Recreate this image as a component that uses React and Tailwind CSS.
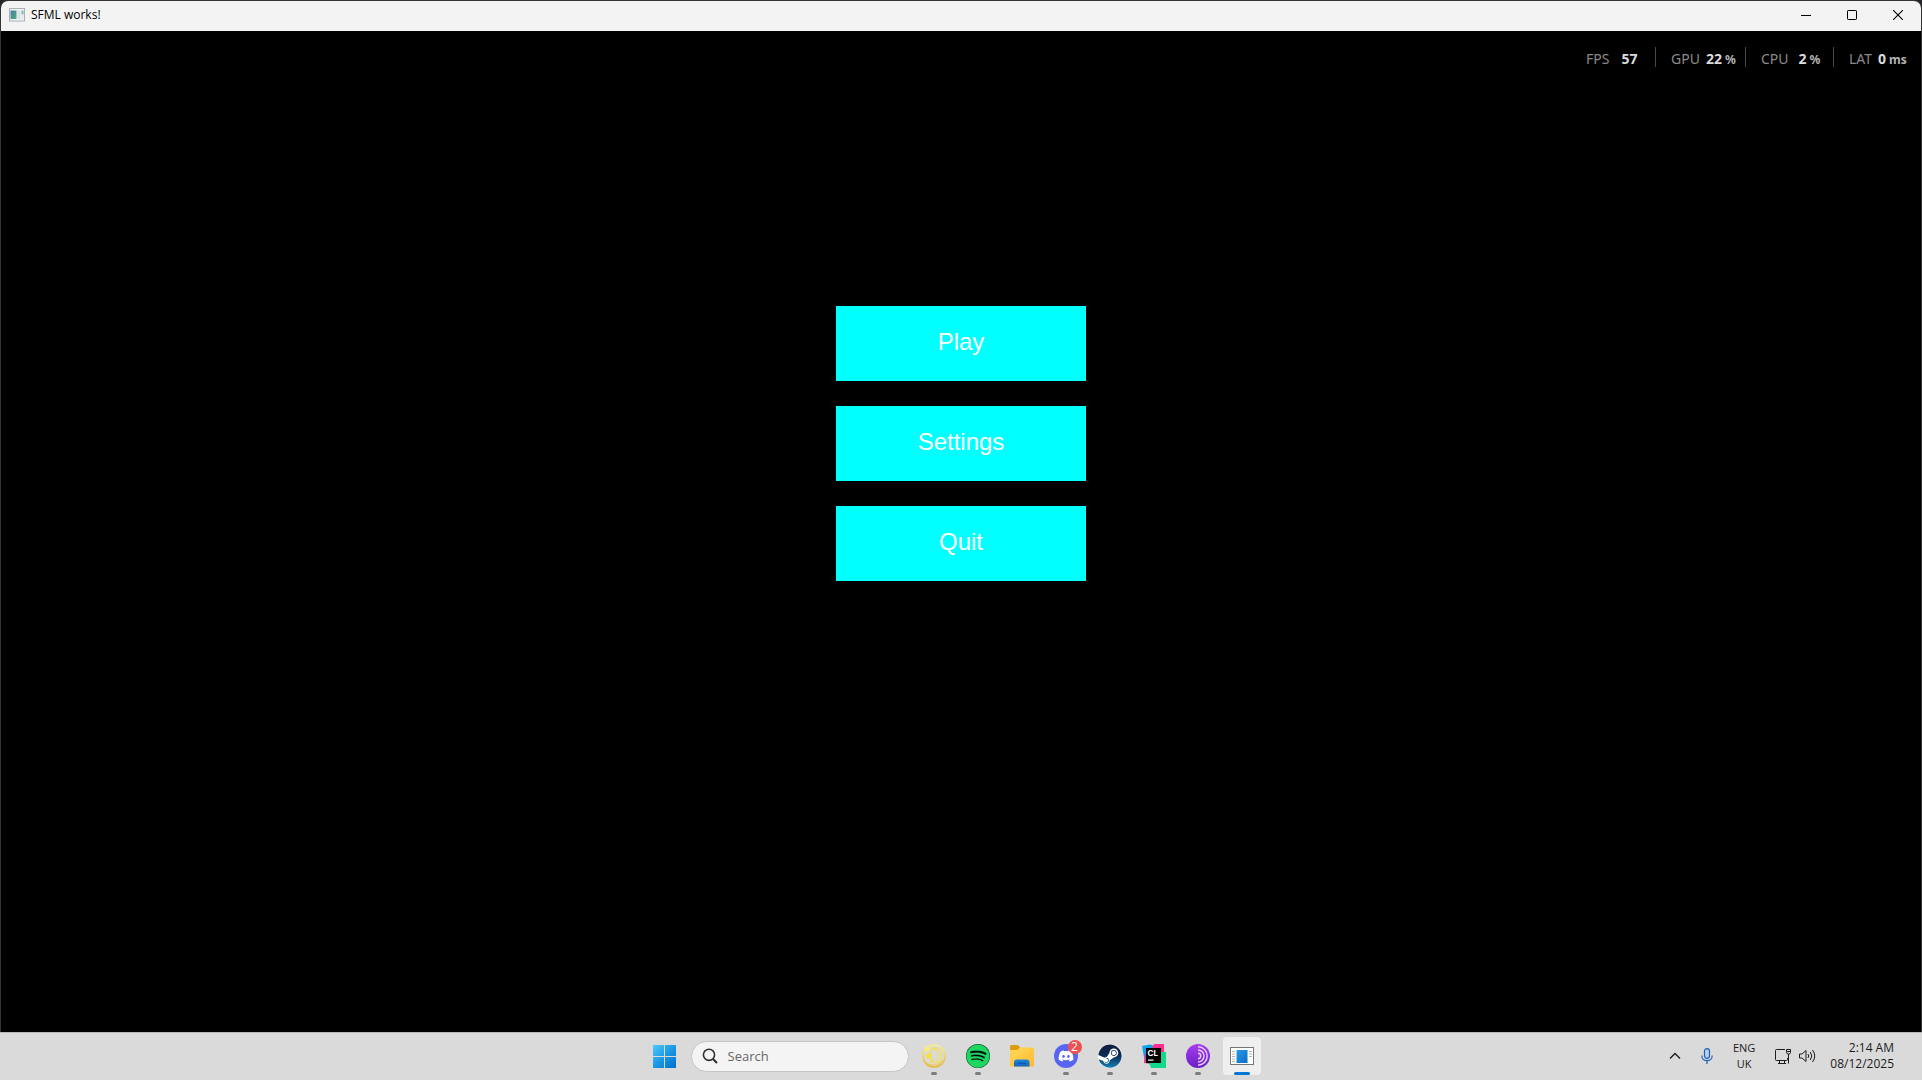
import React from 'react';
import { FaDiscord, FaSpotify, FaSteam } from 'react-icons/fa';

const stats = [
  { label: 'FPS', value: '57', unit: '', box: 'w-[84px] gap-3' },
  { label: 'GPU', value: '22', unit: '%', box: 'w-[90px] gap-[6px] border-l' },
  { label: 'CPU', value: '2', unit: '%', box: 'w-[88px] gap-[10px] border-l' },
  { label: 'LAT', value: '0', unit: 'ms', box: 'w-[88px] gap-[6px] border-l' },
];

const menu = ['Play', 'Settings', 'Quit'];

const WindowIcon = () => (
  <svg width="16" height="14" viewBox="0 0 16 14" aria-hidden="true">
    <defs>
      <linearGradient id="win" x1="0" y1="0" x2="1" y2="1">
        <stop offset="0" stopColor="#4a7ba6" />
        <stop offset="1" stopColor="#4fae7c" />
      </linearGradient>
    </defs>
    <rect x="0.5" y="0.5" width="15" height="12.5" fill="#f1f3f5" stroke="#a9b0b6" />
    <rect x="1.5" y="2.5" width="6" height="8.5" fill="url(#win)" />
    <rect x="8.5" y="2.5" width="3" height="8.5" fill="#dde0e4" />
    <rect x="12.5" y="2.5" width="2" height="4" fill="#7fb8a6" />
    <rect x="12.5" y="7" width="2" height="4" fill="#e3e6ea" />
  </svg>
);

const StartIcon = () => (
  <svg width="24" height="24" viewBox="0 0 24 24" aria-hidden="true">
    <defs>
      <linearGradient id="start" x1="0" y1="0" x2="1" y2="1">
        <stop offset="0" stopColor="#4ccbfb" />
        <stop offset="0.5" stopColor="#1c98e4" />
        <stop offset="1" stopColor="#0070cc" />
      </linearGradient>
    </defs>
    <path fill="url(#start)" d="M0 1h11v11H0zM12 1h11v11H12zM0 13h11v11H0zM12 13h11v11H12z" />
  </svg>
);

const SearchIcon = () => (
  <svg width="16" height="16" viewBox="0 0 16 16" fill="none" stroke="#303030" aria-hidden="true">
    <circle cx="7" cy="6.8" r="5.6" strokeWidth="1.6" />
    <path d="M11 11l4 4" strokeWidth="2.2" />
  </svg>
);

const GoldIcon = () => (
  <svg width="24" height="24" viewBox="0 0 24 24" fill="none" stroke="#ecc94a" aria-hidden="true">
    <defs>
      <linearGradient id="gold" x1="0" y1="0" x2="0" y2="1">
        <stop offset="0" stopColor="#f8ee8a" />
        <stop offset="1" stopColor="#e6b83c" />
      </linearGradient>
    </defs>
    <circle cx="12" cy="12" r="11" stroke="url(#gold)" strokeWidth="1.7" />
    <path d="M4 18.500C8 22 17 22.500 20.500 16" strokeWidth="1" />
    <path d="M12 3.500c-5 3-5.500 11 .5 15.500" stroke="#f4df55" strokeWidth="1.400" />
    <path d="M12 4.500c4-1.500 7 2.500 7 7 0 4-2.500 6.800-5 7.500 3.500-4.500 3-11-2-14.500z" stroke="#f4df55" strokeWidth="1.200" />
    <path d="M2 8L3.500 2l3 2.500L10 2 7 7z" fill="#f8ec7c" stroke="none" />
    <path d="M7 8l1.200 2.600 2.600.6-2 1.900.5 2.900L7 14.300 4.500 15.800l.5-2.800-2.200-2 2.900-.4z" fill="#f7e03f" stroke="none" />
    <circle cx="9.500" cy="17.500" r="1.200" fill="#f5d94a" stroke="none" />
  </svg>
);

const SpotifyIcon = () => (
  <span className="flex rounded-full bg-black">
    <FaSpotify size={24} fill="#1ed760" stroke="#1ed760" strokeWidth={6} aria-hidden="true" />
  </span>
);

const FolderIcon = () => (
  <svg width="24" height="24" viewBox="0 0 24 24" aria-hidden="true">
    <defs>
      <linearGradient id="folder" x1="0" y1="0" x2="1" y2="1">
        <stop offset="0" stopColor="#ffdb5e" />
        <stop offset="1" stopColor="#ffb92c" />
      </linearGradient>
      <linearGradient id="pocket" x1="0" y1="0" x2="0" y2="1">
        <stop offset="0" stopColor="#1d86de" />
        <stop offset="1" stopColor="#1266bd" />
      </linearGradient>
    </defs>
    <path d="M0 2.500Q0 1 1.500 1H7q1 0 1.800.8L10.500 4 8.500 6H0z" fill="#dd9c0c" />
    <path d="M0 6h6.500q1 0 1.700-.7L9.400 4q.4-.5 1-.5H23q1 0 1 1v17q0 1-1 1H1q-1 0-1-1z" fill="url(#folder)" />
    <path d="M4 22.500v-4q0-3 3-3h9.500q3 0 3 3v4z" fill="url(#pocket)" />
    <rect x="7.500" y="18.500" width="8.500" height="1.500" rx="0.700" fill="#0f5aa8" />
  </svg>
);

const DiscordIcon = () => (
  <span className="relative flex size-6 items-center justify-center rounded-full bg-[#5865f2]">
    <FaDiscord size={16} fill="#fff" aria-hidden="true" />
    <span className="absolute -top-1 left-[14px] flex size-[14px] items-center justify-center rounded-full bg-[#f05050] text-[12px] leading-none text-white">
      2
    </span>
  </span>
);

const SteamIcon = () => (
  <span className="relative flex rounded-full bg-white">
    <svg width="0" height="0" className="absolute" aria-hidden="true">
      <defs>
        <linearGradient id="steam" x1="0" y1="0" x2="0" y2="1">
          <stop offset="0" stopColor="#101c3c" />
          <stop offset="0.5" stopColor="#0b2c56" />
          <stop offset="1" stopColor="#1480b4" />
        </linearGradient>
      </defs>
    </svg>
    <FaSteam size={24} fill="url(#steam)" aria-hidden="true" />
  </span>
);

const ClionIcon = () => (
  <svg width="24" height="24" viewBox="0 0 24 24" aria-hidden="true">
    <path d="M0 2l8-1.500L15 3l-6 13-6 3z" fill="#16a0ea" />
    <path d="M12 0h10v9l-7 5-6-7z" fill="#ff2d90" />
    <path d="M3 10l4 0 5 10.500-10-1.500z" fill="#f0329a" />
    <path d="M19 8h5v16H9l-2-5z" fill="#12d88a" />
    <rect x="4" y="4" width="15" height="15" fill="#000" />
    <text x="5.500" y="12" fill="#fff" fontSize="8" fontWeight="700" fontFamily="Inter, sans-serif">CL</text>
    <rect x="6" y="15.500" width="5.500" height="1.200" fill="#fff" />
  </svg>
);

const OnionIcon = () => (
  <svg width="24" height="24" viewBox="0 0 24 24" aria-hidden="true">
    <defs>
      <linearGradient id="onion" x1="0" y1="0" x2="0" y2="1">
        <stop offset="0" stopColor="#a63df0" />
        <stop offset="1" stopColor="#6a1fc4" />
      </linearGradient>
    </defs>
    <circle cx="12" cy="12" r="12" fill="url(#onion)" />
    <path
      d="M12 2.800a9.200 9.200 0 0 1 0 18.400M12 6a6 6 0 0 1 0 12M12 9.300a2.700 2.700 0 0 1 0 5.400"
      fill="none"
      stroke="#e6d3f6"
      strokeWidth="1.400"
    />
  </svg>
);

const AppIcon = () => (
  <svg width="24" height="18" viewBox="0 0 24 18" aria-hidden="true">
    <defs>
      <linearGradient id="app" x1="0" y1="0" x2="1" y2="1">
        <stop offset="0" stopColor="#2a9be6" />
        <stop offset="1" stopColor="#0a6cc2" />
      </linearGradient>
    </defs>
    <rect x="0.500" y="0.500" width="23" height="17" fill="#fff" stroke="#777" />
    <rect x="6.500" y="3" width="11" height="13" fill="url(#app)" />
    <path d="M2 4.500h3M2 7h3M2 9.500h3M2 12h3M2 14.500h3M19 4.500h3M19 7h3M19 9.500h3" stroke="#b4b4b4" />
  </svg>
);

const apps = [
  { name: 'Gold', icon: <GoldIcon /> },
  { name: 'Spotify', icon: <SpotifyIcon /> },
  { name: 'File Explorer', icon: <FolderIcon />, closed: true },
  { name: 'Discord', icon: <DiscordIcon /> },
  { name: 'Steam', icon: <SteamIcon /> },
  { name: 'CLion', icon: <ClionIcon /> },
  { name: 'Tor Browser', icon: <OnionIcon /> },
  { name: 'SFML works!', icon: <AppIcon />, active: true },
];

const TitleBar = () => (
  <header className="flex h-[30px] items-center bg-[#f3f3f3] pb-0.5 pl-2 text-black">
    <WindowIcon />
    <h1 className="ml-[6px] flex-1 text-[12px] leading-4">SFML works!</h1>
    <button aria-label="Minimize" className="flex h-full w-[46px] items-center justify-center">
      <svg width="10" height="10" viewBox="0 0 10 10" stroke="currentColor"><path d="M0 5.500h10" /></svg>
    </button>
    <button aria-label="Maximize" className="flex h-full w-[46px] items-center justify-center">
      <svg width="10" height="10" viewBox="0 0 10 10" fill="none" stroke="currentColor">
        <rect x="0.500" y="0.500" width="9" height="9" rx="0.700" />
      </svg>
    </button>
    <button aria-label="Close" className="flex h-full w-[46px] items-center justify-center">
      <svg width="10" height="10" viewBox="0 0 10 10" stroke="currentColor" strokeWidth="1.100">
        <path d="M0 0l10 10M10 0L0 10" />
      </svg>
    </button>
  </header>
);

const StatsBar = () => (
  <dl className="flex justify-end pt-4 font-[Noto_Sans,sans-serif] text-[14px] leading-5">
    {stats.map(s => (
      <div key={s.label} className={`flex h-5 items-baseline border-[#484848] pl-[15px] pt-[2px] ${s.box}`}>
        <dt className="text-[#8a8a8a]">{s.label}</dt>
        <dd className="flex items-baseline gap-[3px] font-bold text-[#dcdcdc]">
          {s.value}
          {s.unit && <span className="text-[12px] text-[#b4b4b4]">{s.unit}</span>}
        </dd>
      </div>
    ))}
  </dl>
);

const TaskButton = ({ name, icon, active, closed }) => (
  <button
    aria-label={name}
    className={`relative mx-[3px] flex h-[38px] w-[38px] items-center justify-center rounded ${active ? 'bg-[#efefef]' : ''}`}
  >
    {icon}
    {!closed && (
      <span className={`absolute bottom-0 h-[3px] rounded-full ${active ? 'w-4 bg-[#0078d4]' : 'w-[6px] bg-[#7c7c7c]'}`} />
    )}
  </button>
);

const Tray = () => (
  <div className="flex flex-1 items-center justify-end pr-7 text-[#1c1c1c]">
    <button aria-label="Show hidden icons" className="mr-5">
      <svg width="12" height="8" viewBox="0 0 12 8" fill="none" stroke="currentColor" strokeWidth="1.400">
        <path d="M1 6.500l5-5 5 5" />
      </svg>
    </button>
    <button aria-label="Microphone" className="mr-5">
      <svg width="12" height="16" viewBox="0 0 12 16" fill="none" stroke="#1f5fb8" strokeWidth="1.200">
        <rect x="3.500" y="0.700" width="5" height="9.600" rx="2.500" fill="#b9cfec" />
        <path d="M0.800 7.500c0 3 2.200 5.200 5.200 5.200s5.200-2.200 5.200-5.200M6 12.700V16" />
      </svg>
    </button>
    <button className="mr-5 text-center text-[11px] leading-4">
      ENG
      <br />
      UK
    </button>
    <button aria-label="Network and volume" className="mr-[14px] flex items-center gap-2">
      <svg width="16" height="16" viewBox="0 0 16 16" fill="none" stroke="currentColor">
        <path d="M10 1.500H1.500q-1 0-1 1v9q0 1 1 1h10q1 0 1-1V10M4.500 12.500v3M9.500 12.500v3M3 15.500h8" />
        <path d="M11.500 3.500v-2h4v3q0 1.500-2 1.500t-2-1.500zM13.500 6v9q0 .5-.5.500M11.500 3.500h4" />
      </svg>
      <svg width="17" height="14" viewBox="0 0 17 14" fill="none" stroke="currentColor">
        <path d="M0.500 5v4h2.500l4 3.500v-11L3 5z" strokeLinejoin="round" />
        <path d="M9 5q1.400 2 0 4M11.300 3q3 4 0 8M13.500 1q4.500 6 0 12" />
      </svg>
    </button>
    <button className="text-right text-[12px] leading-4">
      2:14 AM
      <br />
      08/12/2025
    </button>
  </div>
);

const Taskbar = () => (
  <footer className="flex h-12 items-center border-t border-[#b9b9b9] bg-[#dadada] pb-px">
    <div className="flex-1 pl-7" />
    <nav className="flex items-center pr-4">
      <button aria-label="Start" className="mr-1 flex h-11 w-11 items-center justify-center">
        <StartIcon />
      </button>
      <label className="mr-[3px] flex h-[31px] w-[218px] items-center gap-[10px] rounded-full border border-[#c6c6c6] bg-[#f4f4f4] pl-[10px]">
        <SearchIcon />
        <input
          type="text"
          aria-label="Search"
          placeholder="Search"
          className="w-40 bg-transparent text-[13px] leading-4 outline-none placeholder:text-[#666]"
        />
      </label>
      {apps.map(a => (
        <TaskButton key={a.name} {...a} />
      ))}
    </nav>
    <Tray />
  </footer>
);

export default function App() {
  return (
    <div className="flex min-h-screen flex-col bg-[#26242a] font-[Open_Sans,Noto_Sans,sans-serif]">
      <main className="flex flex-1 flex-col overflow-hidden rounded-t-lg border border-b-0 border-[#333] bg-black">
        <TitleBar />
        <StatsBar />
        <div className="flex flex-col items-center gap-[25px] pt-[239px]">
          {menu.map(item => (
            <button
              key={item}
              className="h-[75px] w-[250px] bg-[#00ffff] pb-1 font-[Liberation_Sans,Arial,sans-serif] text-2xl text-white"
            >
              {item}
            </button>
          ))}
        </div>
      </main>
      <Taskbar />
    </div>
  );
}
